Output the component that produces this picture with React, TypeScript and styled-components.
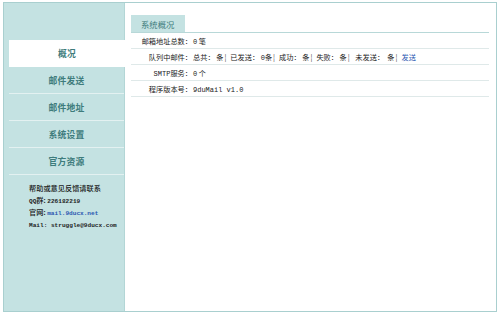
import React from "react";
import styled, { createGlobalStyle } from "styled-components";

const Global = createGlobalStyle`
  html, body { margin: 0; padding: 0; background: #ffffff; }
  body { font-family: "Noto Sans CJK SC", "Noto Sans", sans-serif; }
`;

const Frame = styled.div`
  margin: 2px 3px 0 3px;
  width: 492px;
  height: 308px;
  border: 1px solid #a9cfcf;
  display: flex;
  background: #ffffff;
`;

const Sidebar = styled.div`
  width: 121px;
  background: #c4e2e2;
  border-right: 1px solid #b3d6d6;
  padding-top: 37px;
  box-sizing: border-box;
  display: flex;
  flex-direction: column;
`;

const MenuItem = styled.div<{ $active?: boolean }>`
  margin-left: 5px;
  margin-right: ${(p) => (p.$active ? "-1px" : "0")};
  height: 26px;
  border-bottom: 1px solid ${(p) => (p.$active ? "#ffffff" : "#e3f1f1")};
  background: ${(p) => (p.$active ? "#ffffff" : "transparent")};
  display: flex;
  align-items: center;
  justify-content: center;
  font-size: 8.8px;
  font-weight: 700;
  color: #3e7c7c;
  letter-spacing: 0.2px;
`;

const Help = styled.div`
  padding: 7px 0 0 25px;
  font-size: 7.2px;
  color: #1a1a1a;
  font-weight: 500;
`;

const HelpLine = styled.div`
  height: 12px;
  line-height: 12px;
  white-space: nowrap;
`;

const Latin = styled.span<{ $link?: boolean; $small?: boolean }>`
  font-family: "Liberation Mono", monospace;
  font-size: ${(p) => (p.$small ? "6.1px" : "7px")};
  font-weight: ${(p) => (p.$small ? 700 : 400)};
  line-height: 1;
  color: ${(p) => (p.$link ? "#2a56b0" : "#222222")};
`;

const Main = styled.div`
  flex: 1;
  padding: 12px 7px 0 6px;
  display: flex;
  flex-direction: column;
`;

const Tab = styled.div`
  align-self: flex-start;
  height: 17px;
  padding: 0 10px;
  background: #c4e2e2;
  color: #3e7c7c;
  font-size: 8.4px;
  display: flex;
  align-items: center;
`;

const Table = styled.div`
  border-top: 1px solid #b8d8d8;
  display: flex;
  flex-direction: column;
`;

const Row = styled.div`
  height: 15px;
  border-bottom: 1px solid #dfe9e9;
  display: flex;
  align-items: center;
  font-size: 7.2px;
  color: #222222;
`;

const Label = styled.div`
  width: 61px;
  text-align: right;
  flex-shrink: 0;
`;

const Value = styled.div`
  padding-left: 1px;
  white-space: pre;
`;

const Sep = styled.span`
  margin: 0 4px 0 1px;
  color: #444444;
`;

const Link = styled.span`
  color: #2a56b0;
`;

const menu = ["概况", "邮件发送", "邮件地址", "系统设置", "官方资源"];

export default function App() {
  return (
    <>
      <Global />
      <Frame>
        <Sidebar>
          {menu.map((m, i) => (
            <MenuItem key={m} $active={i === 0}>
              {m}
            </MenuItem>
          ))}
          <Help>
            <HelpLine>帮助或意见反馈请联系</HelpLine>
            <HelpLine>
              <Latin $small>QQ</Latin>群: <Latin $small>226182219</Latin>
            </HelpLine>
            <HelpLine>
              官网: <Latin $small $link>mail.9ducx.net</Latin>
            </HelpLine>
            <HelpLine>
              <Latin $small>Mail: struggle@9ducx.com</Latin>
            </HelpLine>
          </Help>
        </Sidebar>
        <Main>
          <Tab>系统概况</Tab>
          <Table>
            <Row>
              <Label>邮箱地址总数：</Label>
              <Value>
                <Latin>0</Latin> 笔
              </Value>
            </Row>
            <Row>
              <Label>队列中邮件：</Label>
              <Value>
                总共： 条<Sep>¦</Sep>已发送： <Latin>0</Latin>条<Sep>¦</Sep>成功： 条<Sep>¦</Sep>失败： 条<Sep>¦</Sep> 未发送：  条<Sep>¦</Sep><Link>发送</Link>
              </Value>
            </Row>
            <Row>
              <Label>
                <Latin>SMTP</Latin>服务：
              </Label>
              <Value>
                <Latin>0</Latin> 个
              </Value>
            </Row>
            <Row>
              <Label>程序版本号：</Label>
              <Value>
                <Latin>9duMail v1.0</Latin>
              </Value>
            </Row>
          </Table>
        </Main>
      </Frame>
    </>
  );
}
